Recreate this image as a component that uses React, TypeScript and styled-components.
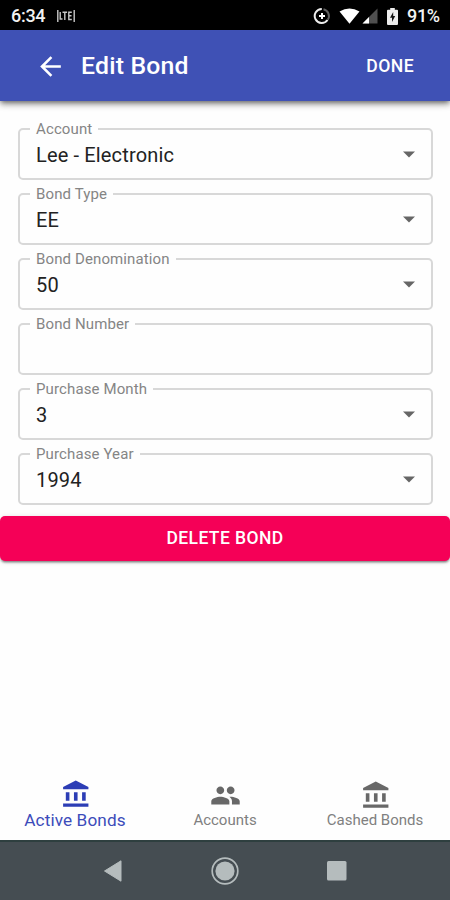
import React from "react";
import styled, { createGlobalStyle } from "styled-components";

const GlobalStyle = createGlobalStyle`
  * { box-sizing: border-box; }
  body { margin: 0; background: #fff; font-family: Roboto, "Liberation Sans", sans-serif; }
  svg { display: block; flex: none; }
`;

const Screen = styled.div`
  width: 450px;
  height: 900px;
  display: flex;
  flex-direction: column;
  background: #fefefe;
  overflow: hidden;
`;

const StatusBar = styled.header`
  height: 30px;
  flex: none;
  display: flex;
  align-items: center;
  justify-content: space-between;
  padding: 2px 10px 0 11px;
  background: #000;
  color: #f2f2f2;
`;

const StatusGroup = styled.div`
  display: flex;
  align-items: center;
`;

const StatusIcons = styled.div`
  display: grid;
  grid-template-columns: 26px 23px 25px 11px;
  align-items: center;
`;

const StatusText = styled.span`
  font-size: 18px;
  line-height: 28px;
  font-weight: 500;
`;

const Clock = styled(StatusText)`
  width: 46px;
  letter-spacing: -0.3px;
`;

const Battery = styled(StatusText)`
  width: 33px;
  margin-left: 9px;
  letter-spacing: -0.35px;
`;

const Toolbar = styled.div`
  height: 71px;
  flex: none;
  display: flex;
  align-items: center;
  padding: 1px 36px 0 35px;
  background: #3f51b5;
  color: #fff;
  box-shadow: 0 2px 5px -1px rgba(0, 0, 0, 0.5), 0 4px 6px rgba(0, 0, 0, 0.2), 0 1px 11px rgba(0, 0, 0, 0.12);
`;

const IconButton = styled.button`
  border: 0;
  padding: 0;
  background: none;
  color: inherit;
`;

const Title = styled.h1`
  flex: 1;
  margin: 0 0 0 15px;
  font-size: 24.8px;
  line-height: 30px;
  font-weight: 500;
  letter-spacing: 0.2px;
`;

const DoneButton = styled.button`
  border: 0;
  padding: 0;
  background: none;
  color: #fff;
  font: 500 17.6px/24px Roboto, sans-serif;
  letter-spacing: 0.4px;
`;

const Form = styled.form`
  flex: 1;
  padding-top: 20px;
`;

const Fields = styled.div`
  display: flex;
  flex-direction: column;
  gap: 6px;
  padding: 0 17px 0 18px;
`;

const Outline = styled.fieldset`
  height: 59px;
  min-width: 0;
  margin: 0;
  padding: 0 16px 0 10px;
  border: 2px solid #d8d8d8;
  border-radius: 5px;
`;

const Label = styled.legend`
  height: 16px;
  padding: 0 6px;
  font-size: 15px;
  line-height: 16px;
  letter-spacing: 0.12px;
  color: #858585;
`;

const Value = styled.div`
  height: 35px;
  display: flex;
  align-items: center;
  justify-content: space-between;
  padding-left: 6px;
  font-size: 20px;
  letter-spacing: 0.15px;
  color: #222;
`;

const DeleteButton = styled.button`
  display: block;
  width: 100%;
  height: 45px;
  margin-top: 11px;
  padding: 0 0 2px;
  border: 0;
  border-radius: 5px;
  background: #f50057;
  color: #fff;
  font: 500 17.5px/24px Roboto, sans-serif;
  letter-spacing: 0.4px;
  box-shadow: 0 3px 2px -2px rgba(0, 0, 0, 0.3), 0 2px 2px rgba(0, 0, 0, 0.18), 0 1px 5px rgba(0, 0, 0, 0.15);
`;

const Tabs = styled.nav`
  height: 64px;
  flex: none;
  display: grid;
  grid-template-columns: repeat(3, 1fr);
`;

const Tab = styled.a<{ $active?: boolean }>`
  display: flex;
  flex-direction: column;
  align-items: center;
  padding-top: ${(p) => (p.$active ? 3 : 4)}px;
  color: ${(p) => (p.$active ? "#2c3db5" : "#686868")};
`;

const TabText = styled.span<{ $active?: boolean }>`
  margin-top: ${(p) => (p.$active ? 0 : -1)}px;
  font-size: ${(p) => (p.$active ? 17.2 : 15)}px;
  line-height: 20px;
  letter-spacing: ${(p) => (p.$active ? 0.1 : 0)}px;
  color: ${(p) => (p.$active ? "#3c4cba" : "#808080")};
`;

const SystemBar = styled.footer`
  height: 60px;
  flex: none;
  display: grid;
  grid-template-columns: repeat(3, 111.5px);
  justify-content: center;
  align-items: center;
  justify-items: center;
  padding-bottom: 1px;
  border-top: 2px solid #2e3f3f;
  background: #454d52;
`;

const LteIcon = () => (
  <svg width="18" height="12" viewBox="0 0 18 12" fill="none" stroke="#c8c8c8" strokeWidth="1.4">
    <path d="M.8 0v12M17.2 0v12" />
    <path d="M3.2 2v7h2.3M5.5 2.2h4.6M7.8 2v8M14.8 2.2h-3v7.3h3M12 5.7h2.5" />
  </svg>
);

const SaverIcon = () => (
  <svg width="18" height="18" viewBox="0 0 18 18" fill="none">
    <path d="M10.5 2.2a7 7 0 0 1 4.3 10.6" stroke="#606060" strokeWidth="2" />
    <path d="M8.8 2A7 7 0 1 0 14.5 13" stroke="#ededed" strokeWidth="2" />
    <path d="M9 6v6M6 9h6" stroke="#fff" strokeWidth="2" />
  </svg>
);

const WifiIcon = () => (
  <svg width="21" height="16" viewBox="0 0 21 16">
    <path d="M.5 3.5Q10.5-2.5 20.5 3.5L10.5 15.8Z" fill="#fff" />
  </svg>
);

const SignalIcon = () => (
  <svg width="16" height="16" viewBox="0 0 16 16">
    <path d="M15.5.5v15H.5Z" fill="#505050" />
    <path d="M7 9v6.5H.5Z" fill="#fff" />
  </svg>
);

const BatteryIcon = () => (
  <svg width="11" height="17" viewBox="0 0 11 17">
    <path d="M3.2 0h4.6v1.8H10q1 0 1 1V16q0 1-1 1H1q-1 0-1-1V2.8q0-1 1-1h2.2Z" fill="#eee" />
    <path d="M6.2 4 3 9.8h2v4.2L8.2 8H6.2Z" fill="#151515" />
  </svg>
);

const BackIcon = () => (
  <svg width="31" height="31" viewBox="0 0 24 24" fill="currentColor">
    <path d="M20 11H7.83l5.59-5.59L12 4l-8 8 8 8 1.41-1.41L7.83 13H20v-2z" />
  </svg>
);

const CaretIcon = () => (
  <svg width="12" height="7" viewBox="0 0 12 7">
    <path d="M0 .5h12L6 6.5Z" fill="#666" />
  </svg>
);

const BankIcon = () => (
  <svg width="31" height="31" viewBox="0 0 24 24" fill="currentColor">
    <path d="M12.2 1.2 2.4 6.2v1.7H22V6.2ZM4.5 10.2v6.6h2.8v-6.6ZM10.8 10.2v6.6h2.8v-6.6ZM17.1 10.2v6.6h2.8v-6.6ZM2.4 19v2.4H22V19Z" />
  </svg>
);

const PeopleIcon = () => (
  <svg width="31" height="31" viewBox="0 0 24 24" fill="currentColor">
    <path d="M16 11c1.66 0 2.99-1.34 2.99-3S17.66 5 16 5s-3 1.34-3 3 1.34 3 3 3zm-8 0c1.66 0 2.99-1.34 2.99-3S9.66 5 8 5 5 6.34 5 8s1.34 3 3 3zm0 2c-2.33 0-7 1.17-7 3.5V19h14v-2.5c0-2.33-4.67-3.5-7-3.5zm8 0c-.29 0-.62.02-.97.05 1.16.84 1.97 1.97 1.97 3.45V19h6v-2.5c0-2.33-4.67-3.5-7-3.5z" />
  </svg>
);

const fields = [
  { label: "Account", value: "Lee - Electronic", select: true },
  { label: "Bond Type", value: "EE", select: true },
  { label: "Bond Denomination", value: "50", select: true },
  { label: "Bond Number", value: "", select: false },
  { label: "Purchase Month", value: "3", select: true },
  { label: "Purchase Year", value: "1994", select: true },
];

export default function App() {
  return (
    <>
      <GlobalStyle />
      <Screen>
        <StatusBar>
          <StatusGroup>
            <Clock>6:34</Clock>
            <LteIcon />
          </StatusGroup>
          <StatusGroup>
            <StatusIcons>
              <SaverIcon />
              <WifiIcon />
              <SignalIcon />
              <BatteryIcon />
            </StatusIcons>
            <Battery>91%</Battery>
          </StatusGroup>
        </StatusBar>
        <Toolbar>
          <IconButton aria-label="Back">
            <BackIcon />
          </IconButton>
          <Title>Edit Bond</Title>
          <DoneButton>DONE</DoneButton>
        </Toolbar>
        <Form>
          <Fields>
            {fields.map((f) => (
              <Outline key={f.label}>
                <Label>{f.label}</Label>
                <Value>
                  <span>{f.value}</span>
                  {f.select && <CaretIcon />}
                </Value>
              </Outline>
            ))}
          </Fields>
          <DeleteButton type="button">DELETE BOND</DeleteButton>
        </Form>
        <Tabs>
          <Tab $active>
            <BankIcon />
            <TabText $active>Active Bonds</TabText>
          </Tab>
          <Tab>
            <PeopleIcon />
            <TabText>Accounts</TabText>
          </Tab>
          <Tab>
            <BankIcon />
            <TabText>Cashed Bonds</TabText>
          </Tab>
        </Tabs>
        <SystemBar>
          <svg width="20" height="22" viewBox="0 0 20 22">
            <path d="M17 .8v20.4L.5 11Z" fill="#b5bcbd" stroke="#b5bcbd" strokeLinejoin="round" />
          </svg>
          <svg width="28" height="28" viewBox="0 0 28 28">
            <circle cx="14" cy="14" r="12.8" fill="none" stroke="#b5bcbd" strokeWidth="1.7" />
            <circle cx="14" cy="14" r="9.6" fill="#b5bcbd" />
          </svg>
          <svg width="20" height="20" viewBox="0 0 20 20">
            <rect width="19.5" height="19.5" rx="1.5" fill="#b5bcbd" />
          </svg>
        </SystemBar>
      </Screen>
    </>
  );
}
